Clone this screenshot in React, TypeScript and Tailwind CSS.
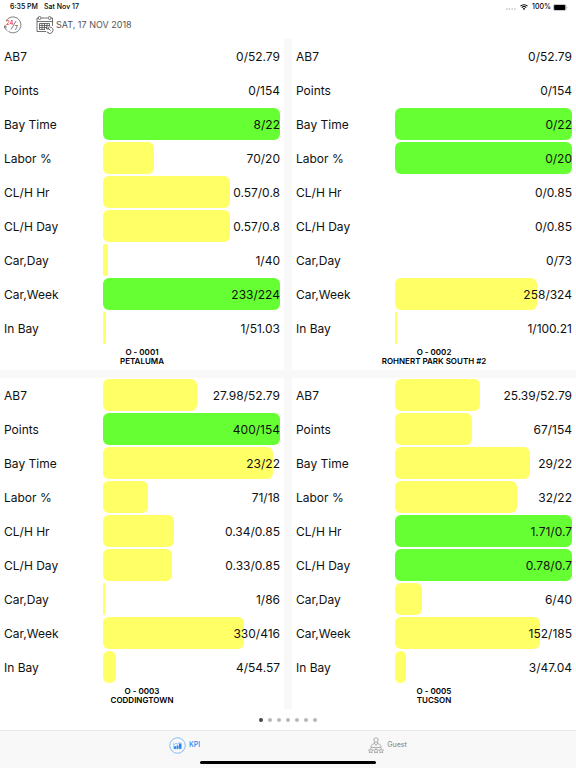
import { useState } from "react";
import clsx from "clsx";

type Metric = { label: string; value: string; fill: number };
type Store = { code: string; name: string; metrics: Metric[] };

const labels = [
    "AB7",
    "Points",
    "Bay Time",
    "Labor %",
    "CL/H Hr",
    "CL/H Day",
    "Car,Day",
    "Car,Week",
    "In Bay",
];

const makeStore = (
    code: string,
    name: string,
    rows: [string, number][]
): Store => ({
    code,
    name,
    metrics: rows.map(([value, fill], i) => ({
        label: labels[i],
        value,
        fill,
    })),
});

const stores: Store[] = [
    makeStore("O - 0001", "PETALUMA", [
        ["0/52.79", 0],
        ["0/154", 0],
        ["8/22", 100],
        ["70/20", 28.5],
        ["0.57/0.8", 71.5],
        ["0.57/0.8", 71.5],
        ["1/40", 2.5],
        ["233/224", 100],
        ["1/51.03", 1.7],
    ]),
    makeStore("O - 0002", "ROHNERT PARK SOUTH #2", [
        ["0/52.79", 0],
        ["0/154", 0],
        ["0/22", 100],
        ["0/20", 100],
        ["0/0.85", 0],
        ["0/0.85", 0],
        ["0/73", 0],
        ["258/324", 80],
        ["1/100.21", 0.7],
    ]),
    makeStore("O - 0003", "CODDINGTOWN", [
        ["27.98/52.79", 53],
        ["400/154", 100],
        ["23/22", 96],
        ["71/18", 25.5],
        ["0.34/0.85", 40],
        ["0.33/0.85", 39],
        ["1/86", 0.9],
        ["330/416", 79.5],
        ["4/54.57", 7.3],
    ]),
    makeStore("O - 0005", "TUCSON", [
        ["25.39/52.79", 48],
        ["67/154", 43.5],
        ["29/22", 76],
        ["32/22", 69],
        ["1.71/0.7", 100],
        ["0.78/0.7", 100],
        ["6/40", 15],
        ["152/185", 82],
        ["3/47.04", 6.3],
    ]),
];

function StatusBar() {
    return (
        <div className="flex h-3.5 items-center justify-between pr-2 pl-2.5 text-[7px] font-medium text-black">
            <div className="flex gap-1.5">
                <span>6:35 PM</span>
                <span>Sat Nov 17</span>
            </div>
            <div className="flex items-center gap-0.5">
                <svg width="10" height="8" viewBox="0 0 10 8" fill="#b5b5b5">
                    <circle cx="1" cy="6" r="0.8" />
                    <circle cx="3.6" cy="6" r="0.8" />
                    <circle cx="6.2" cy="6" r="0.8" />
                    <circle cx="8.8" cy="6" r="0.8" />
                </svg>
                <svg
                    className="mx-0.5"
                    width="8"
                    height="6"
                    viewBox="0 0 16 12"
                    fill="none"
                    stroke="#000"
                    strokeWidth="2.2"
                >
                    <path d="M1 4.4a10 10 0 0 1 14 0" />
                    <path d="M3.6 7.2a6.3 6.3 0 0 1 8.8 0" />
                    <path
                        d="M8 11.8 5.6 9.3a3.5 3.5 0 0 1 4.8 0z"
                        fill="#000"
                        stroke="none"
                    />
                </svg>
                <span>100%</span>
                <svg width="15" height="7" viewBox="0 0 15 7">
                    <rect
                        x="0.4"
                        y="0.4"
                        width="12.6"
                        height="6.2"
                        rx="1.6"
                        fill="#fff"
                        stroke="#999"
                        strokeWidth="0.6"
                    />
                    <rect
                        x="1.1"
                        y="1.1"
                        width="11.2"
                        height="4.8"
                        rx="0.9"
                    />
                    <path d="M13.7 2.4c.8.2.8 2 0 2.2z" fill="#999" />
                </svg>
            </div>
        </div>
    );
}

function AroundClockIcon() {
    return (
        <svg
            width="18"
            height="18"
            viewBox="0 0 36 36"
            fill="none"
            stroke="#555"
            strokeWidth="1.5"
        >
            <path d="M4 10A16 16 0 1 1 9 31" />
            <path d="M1.5 20c.5 4 2.5 8 5.5 10" />
            <path d="M1 24.5 1.5 19l4.500 3.500" />
            <path d="m14 27 10-17" />
            <text
                x="4"
                y="18"
                fontSize="12"
                fontWeight="500"
                fill="#f02a2a"
                stroke="none"
            >
                24
            </text>
            <text x="21" y="27" fontSize="12" fill="#333" stroke="none">
                7
            </text>
        </svg>
    );
}

function CalendarIcon() {
    return (
        <svg
            width="18"
            height="18"
            viewBox="0 0 36 36"
            fill="none"
            stroke="#444"
            strokeWidth="1.5"
        >
            <path d="M20 31H2V4h3M10 4h14M29 4h4v16M2 11h31" />
            <rect x="5" y="1" width="4.5" height="6" rx="2" />
            <rect x="25" y="1" width="4.5" height="6" rx="2" />
            <path d="M7 15h20v5M7 15v12h11M7 19h20M7 23h14M12 15v12M17 15v12M22 15v7" />
            <path d="M22 25a6.500 6.500 0 1 1 1 8M21 21v5h5" />
            <path d="m24 24 5 5M22 31l3 3" />
        </svg>
    );
}

function KpiIcon() {
    return (
        <svg width="17" height="17" viewBox="0 0 34 34" fill="none">
            <circle cx="17" cy="17" r="15.5" stroke="#4a9af6" strokeWidth="1.3" />
            <path d="M9 11v12.5h16V11" stroke="#7db5f8" strokeWidth="1" />
            <path
                d="M10 18.5h4v5h-4zM15 17h4v6.5h-4zM20 13h4.500v10.500H20z"
                fill="#2385f5"
            />
            <path
                d="m10 15.500 4-3 3 2 5-4"
                stroke="#4a9af6"
                strokeWidth="1.2"
            />
        </svg>
    );
}

function GuestIcon() {
    return (
        <svg
            width="16"
            height="17"
            viewBox="0 0 32 34"
            fill="none"
            stroke="#8e8e8e"
            strokeWidth="1.4"
        >
            <circle cx="16" cy="6" r="4.5" />
            <path d="M13 10v3l-5 2c-2 1-2 4-2 6h20c0-2 0-5-2-6l-5-2v-3M13 13l3 4 3-4" />
            <path
                id="star"
                d="m5.500 23 1.400 3 3.300.4-2.400 2.200.6 3.200-2.900-1.600-2.900 1.600.6-3.200L.8 26.400l3.300-.4z"
            />
            <use href="#star" x="10.5" />
            <use href="#star" x="21" />
        </svg>
    );
}

function MetricRow({ metric }: { metric: Metric }) {
    return (
        <div className="flex h-[34px] items-center">
            <dt className="w-[36%] pt-0.5">{metric.label}</dt>
            <dd className="grid flex-1 items-center">
                <div
                    className={clsx(
                        "col-start-1 row-start-1 h-8 rounded-md",
                        metric.fill === 100 ? "bg-[#66ff33]" : "bg-[#ffff66]"
                    )}
                    style={{ width: `${metric.fill}%` }}
                />
                <span className="col-start-1 row-start-1 pt-0.5 text-right">
                    {metric.value}
                </span>
            </dd>
        </div>
    );
}

function StoreCard({ store }: { store: Store }) {
    return (
        <section className="bg-white px-1">
            <dl className="text-xs text-[#111]">
                {store.metrics.map((metric) => (
                    <MetricRow key={metric.label} metric={metric} />
                ))}
            </dl>
            <h2 className="pt-[3px] pb-1 text-center text-[8px] leading-[9px] font-semibold text-black">
                {store.code}
                <br />
                {store.name}
            </h2>
        </section>
    );
}

export default function App() {
    const [page, setPage] = useState(0);
    const [tab, setTab] = useState("kpi");

    return (
        <div className="flex min-h-screen flex-col bg-white font-['Inter',sans-serif]">
            <StatusBar />

            {/* Toolbar */}
            <header className="flex h-[25px] items-start gap-3.5 px-1 pt-0.5">
                <button aria-label="Around the clock">
                    <AroundClockIcon />
                </button>
                <button className="flex items-center gap-0.5 text-[9px] leading-[18px] text-[#555]">
                    <CalendarIcon />
                    SAT, 17 NOV 2018
                </button>
            </header>

            {/* Store cards */}
            <main className="grid grid-cols-2 gap-2 bg-[#f8f8f8]">
                {stores.map((store) => (
                    <StoreCard key={store.code} store={store} />
                ))}
            </main>

            {/* Page dots */}
            <div className="flex flex-1 items-center justify-center gap-[5px]">
                {[0, 1, 2, 3, 4, 5, 6].map((i) => (
                    <button
                        key={i}
                        aria-label={`Page ${i + 1}`}
                        onClick={() => setPage(i)}
                        className={clsx(
                            "size-1 rounded-full",
                            page === i ? "bg-[#444]" : "bg-[#b8b8b8]"
                        )}
                    />
                ))}
            </div>

            {/* Tab bar */}
            <footer className="border-t border-[#e6e6e6] bg-[#f8f8f8] pb-1">
                <nav className="flex h-7 items-center justify-center gap-42 text-[7px] font-medium">
                    <button
                        onClick={() => setTab("kpi")}
                        aria-current={tab === "kpi" ? "page" : undefined}
                        className="flex items-center gap-[3px] text-[#2385f5]"
                    >
                        <KpiIcon />
                        KPI
                    </button>
                    <button
                        onClick={() => setTab("guest")}
                        aria-current={tab === "guest" ? "page" : undefined}
                        className="flex items-center gap-[3px] text-[#929292]"
                    >
                        <GuestIcon />
                        Guest
                    </button>
                </nav>
                <div className="mx-auto mt-0.5 h-[3px] w-44 rounded-full bg-black" />
            </footer>
        </div>
    );
}
